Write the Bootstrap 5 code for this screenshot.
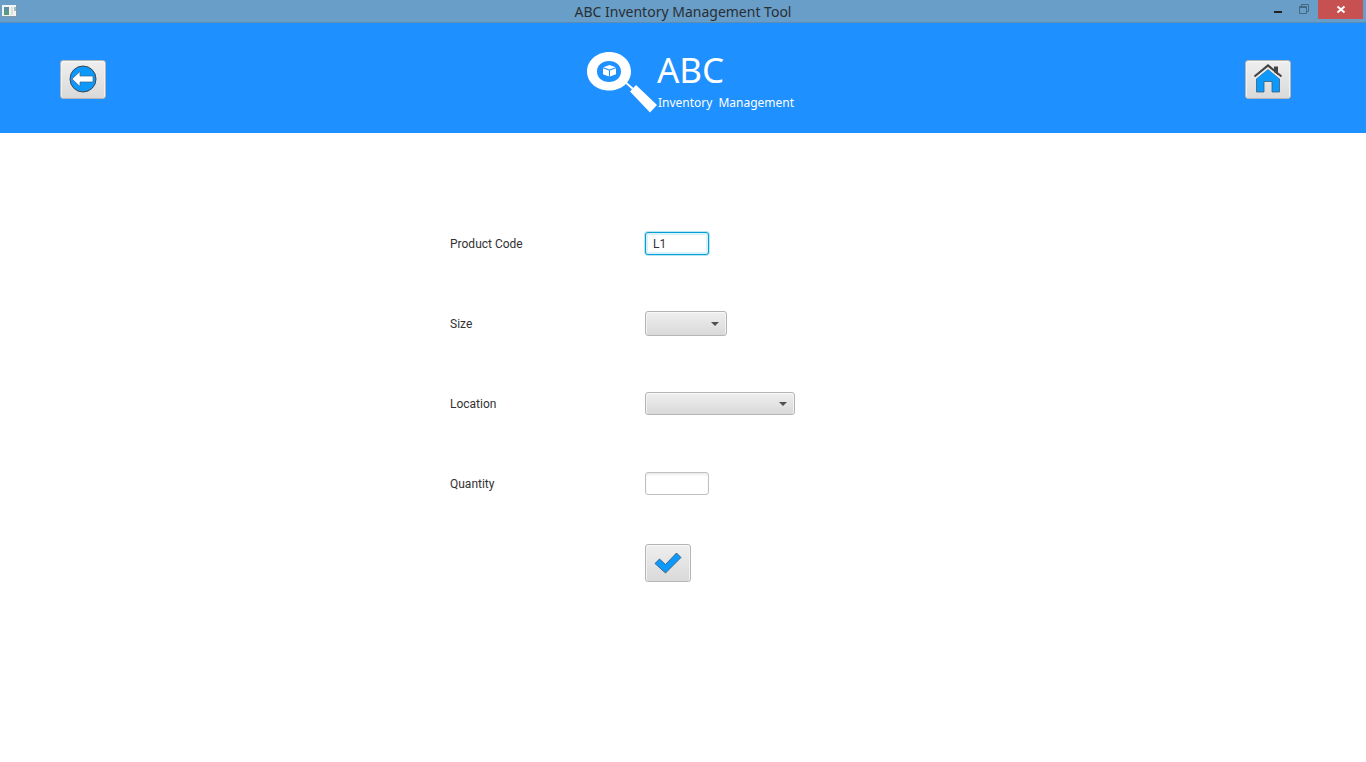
<!DOCTYPE html>
<html lang="en">
<head>
<meta charset="utf-8">
<meta name="viewport" content="width=device-width, initial-scale=1">
<title>ABC Inventory Management Tool</title>
<link href="https://cdn.jsdelivr.net/npm/bootstrap@5.3.0/dist/css/bootstrap.min.css" rel="stylesheet">
<style>
  body { font-family: Roboto, "Liberation Sans", sans-serif; font-size: 12px; color: #323232; background: #fff; }
  .titlebar { height: 23px; background: #689ec8; border-bottom: 1px solid #5d8db2; display: grid; grid-template-columns: 1fr auto 1fr; }
  .titlebar h1 { font: 400 14px/23px "Noto Sans", "Open Sans", sans-serif; color: #2a2e33; }
  .win-controls { padding-right: 3px; }
  .win-btn { height: 19px; width: 26px; padding: 0; border: 0; background: none; display: flex; }
  .win-close { width: 45px; margin-left: 1px; background: #c75050; }
  .app-header { height: 110px; background: #1e90ff; padding: 2px 75px 0 60px; display: grid; grid-template-columns: 1fr auto 1fr; align-items: center; }
  .brand { padding: 6px 0 0 30px; color: #fff; }
  .brand-name { font: 400 35px/38px "Noto Sans", "Open Sans", sans-serif; }
  .brand-sub { font: 400 12px/16px "Noto Sans", "Open Sans", sans-serif; gap: 6px; padding: 6px 0 0 1px; }
  .fx, .fx:focus { border: 1px solid #b5b5b5; border-radius: 3px; background: linear-gradient(#efefef, #d9d9d9); box-shadow: inset 0 1px #f8f8f8, inset 1px 0 #f2f2f2, inset -1px 0 #f2f2f2; }
  .fx-btn { width: 46px; height: 39px; padding: 0; }
  .entry { width: 466px; max-width: 100%; padding-top: 70px; }
  .entry-row { display: grid; grid-template-columns: 195px 1fr; align-items: center; height: 80px; }
  .entry-row label { padding-top: 2px; }
  .entry-row .fx-btn { height: 38px; }
  .fx-input { width: 64px; height: 23px; padding: 2px 7px 0; font-size: 12px; line-height: 20px; color: #323232; border: 1px solid #c0c0c0; border-radius: 3px; box-shadow: inset 0 2px 2px #eee; }
  .fx-input:focus { color: #323232; border-color: #039ed3; box-shadow: 0 0 0 1px #b9e4f4, inset 0 0 0 2px #d9f1f9; outline: 0; }
  .fx-select, .fx-select:focus { height: 23px; padding: 0 20px 0 7px; font-size: 12px;
    background-image: url("data:image/svg+xml,%3Csvg xmlns='http://www.w3.org/2000/svg' viewBox='0 0 8 4'%3E%3Cpath d='M0 0h8L4 4z' fill='%23505050'/%3E%3C/svg%3E"), linear-gradient(#efefef, #d9d9d9);
    background-size: 8px 4px, 100% 100%; background-position: right 7px top 9px, 0 0; background-repeat: no-repeat; }
  .size-select, .size-select:focus { width: 82px; height: 25px; background-position: right 7px top 10px, 0 0; }
  .location-select { width: 150px; }
</style>
</head>
<body>
<div class="titlebar">
  <svg width="18" height="22" viewBox="0 0 18 22" aria-hidden="true">
    <path d="M2 5h15v12H2z" fill="#8796a3"/><path d="M2 5h14v11H2z" fill="#f3f3f3"/>
    <path d="M4 7h5v8H4z" fill="#5e91a0"/><path d="M4 11h5v4H4z" fill="#579d7c"/><path d="M11 7h2v8h-2z" fill="#dedede"/><path d="M14 7h2v4h-2z" fill="#9fbfc4"/>
  </svg>
  <h1 class="m-0 text-center">ABC Inventory Management Tool</h1>
  <div class="win-controls d-flex justify-content-end">
    <button class="win-btn" type="button" aria-label="Minimize"><svg width="26" height="19"><path d="M9 11h8v2H9z" fill="#222"/></svg></button>
    <button class="win-btn" type="button" aria-label="Restore"><svg width="26" height="19" fill="none" stroke="#456983"><path d="M8.500 6.500h7v7h-7zM8.500 7.500h7M10.500 6V4.500h7v7H16"/></svg></button>
    <button class="win-btn win-close" type="button" aria-label="Close"><svg width="45" height="19"><path d="M19.500 6.500l7 6M26.500 6.500l-7 6" stroke="#fff" stroke-width="2"/></svg></button>
  </div>
</div>

<header class="app-header">
  <button class="fx fx-btn" type="button" aria-label="Back">
    <svg width="28" height="28" viewBox="0 0 28 28" class="d-block mx-auto">
      <circle cx="14" cy="14" r="13" fill="#0d98fb" stroke="#3d4650"/>
      <path d="M3 14l8-7.500V11h13v6H11v4.500z" fill="#fff" stroke="#33658f" stroke-width=".7"/></svg>
  </button>
  <div class="brand d-flex">
    <svg width="70" height="62" viewBox="0 0 70 62" fill="#fff" aria-hidden="true">
      <path fill-rule="evenodd" d="M22 1c12.500 0 22 8.500 22 19.500S34.500 39.500 22 39.500 0 31 0 20.500 9.500 1 22 1zM22 10c-7 0-12 4.500-12 10.500S15 31 22 31s12-4.500 12-10.500S29 10 22 10z"/>
      <path d="M22.500 14l6.200 2.200-6.200 2.400-6.200-2.400zM16 17.200l6 2.400v6l-6-2.400zM29 17.200l-6 2.400v6l6-2.400z"/>
      <path d="M38 32l1.500-1 7 6-1.500 1.500z"/><path d="M49 34l21 20-7 7.500-20-21z"/>
    </svg>
    <div>
      <div class="brand-name">ABC</div>
      <div class="brand-sub d-flex"><span>Inventory</span><span>Management</span></div>
    </div>
  </div>
  <button class="fx fx-btn ms-auto" type="button" aria-label="Home">
    <svg width="30" height="30" viewBox="0 0 30 30" class="d-block mx-auto">
      <path d="M3.500 28V14.500L15 5l11.500 9.500V28h-7.500V17.500h-8V28z" fill="#0d98fb" stroke="#355f80" stroke-width=".8"/>
      <path d="M1.500 13.500L15 2.500l13.500 11" fill="none" stroke="#eee" stroke-width="4"/>
      <path d="M21 2.500h4V11l-4-3z" fill="#444"/>
      <path d="M1.500 12.500L15 1.500l13.500 11" fill="none" stroke="#444" stroke-width="2.200"/></svg>
  </button>
</header>

<main class="container-fluid">
  <form class="entry mx-auto">
    <div class="entry-row"><label for="code">Product Code</label><input class="form-control fx-input" id="code" type="text" value="L1" autofocus></div>
    <div class="entry-row"><label for="size">Size</label><select class="form-select fx fx-select size-select" id="size"><option></option></select></div>
    <div class="entry-row"><label for="location">Location</label><select class="form-select fx fx-select location-select" id="location"><option></option></select></div>
    <div class="entry-row"><label for="quantity">Quantity</label><input class="form-control fx-input" id="quantity" type="text"></div>
    <div class="entry-row"><span></span>
      <button class="fx fx-btn" type="button" aria-label="Confirm">
        <svg width="28" height="24" viewBox="0 0 28 24" class="d-block mx-auto"><path d="M1 12.500L5.500 8l6 5.500L22.500 2 27 6.500 11.500 22z" fill="#0d98fb" stroke="#355f80" stroke-width=".9" stroke-linejoin="round"/></svg>
      </button>
    </div>
  </form>
</main>
<script src="https://cdn.jsdelivr.net/npm/bootstrap@5.3.0/dist/js/bootstrap.bundle.min.js"></script>
</body>
</html>
